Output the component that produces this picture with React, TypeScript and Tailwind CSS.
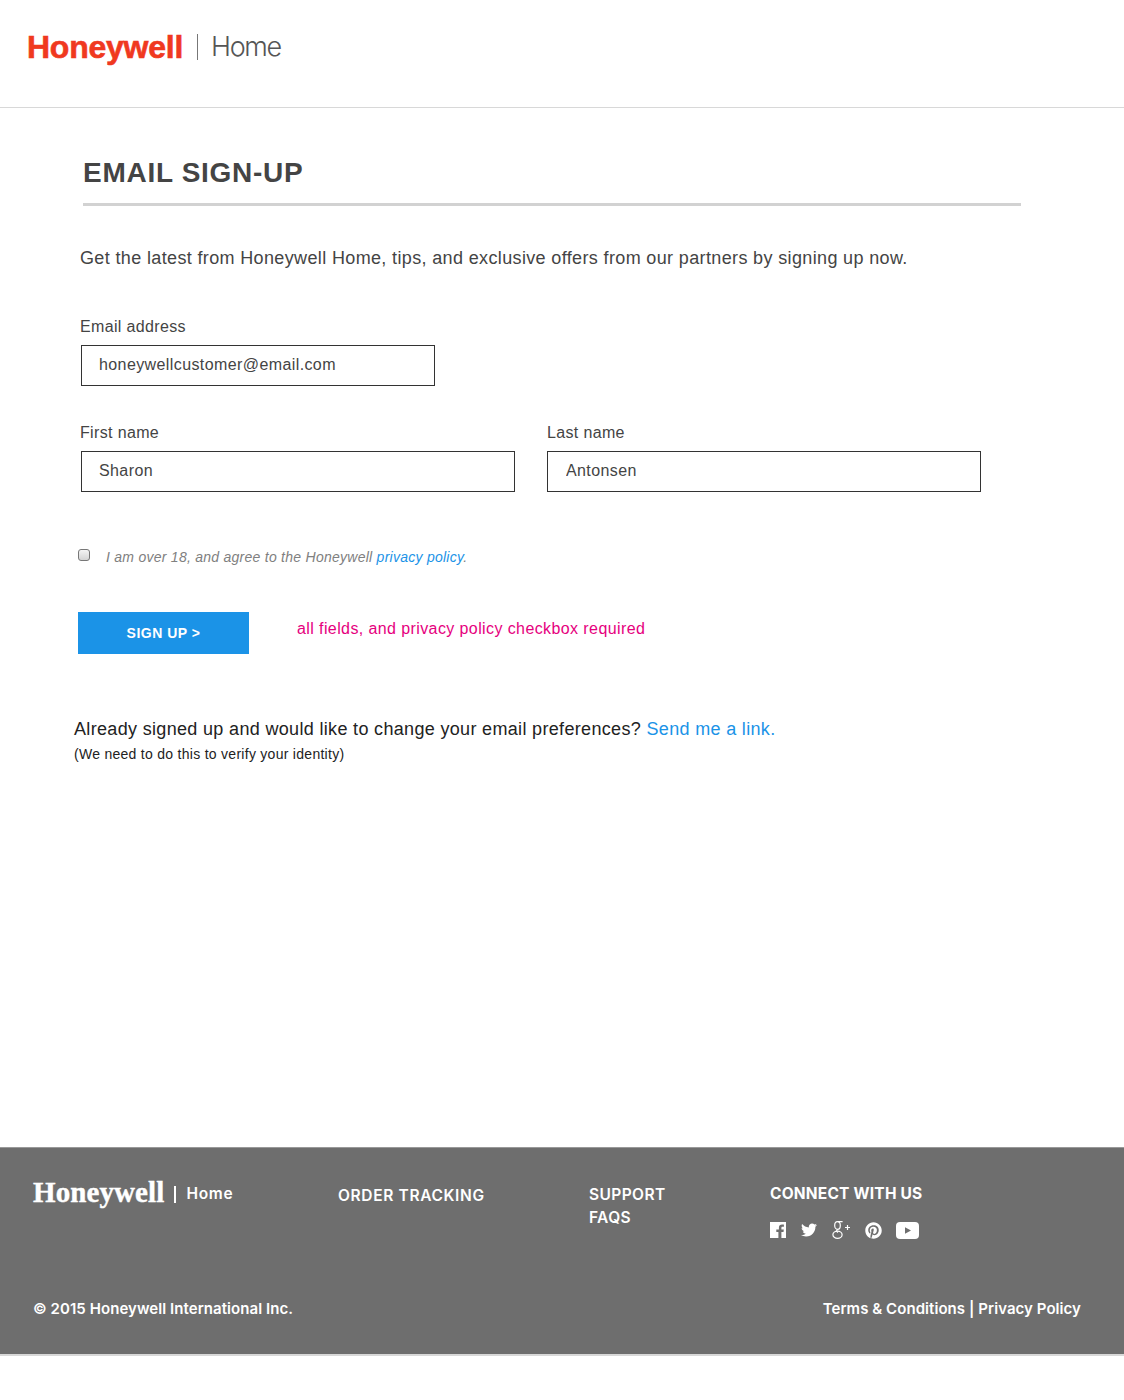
import React from 'react';
import { FaTwitter, FaPinterest } from 'react-icons/fa';

const helvetica = "font-['Liberation_Sans',Arial,sans-serif]";
const footerFont = "font-['Inter','Open_Sans',sans-serif]";

const Field = ({ label, value, className, last }: { label: string; value: string; className: string; last?: boolean }) => (
  <div className={className}>
    <label className={`block text-[16px] leading-[20px] tracking-[0.35px] text-[#444] ${last ? 'pl-[3px]' : 'pl-[2px]'}`}>{label}</label>
    <input
      readOnly
      value={value}
      className={`mt-[8px] ml-[3px] block h-[41px] w-full border border-[#333] bg-white pb-[2px] text-[16px] tracking-[0.4px] text-[#444] outline-none ${last ? 'px-[18px]' : 'px-[17px]'}`}
    />
  </div>
);

const Facebook = () => (
  <svg viewBox="0 0 16 16" className="h-[16px] w-[16px]" fill="white">
    <path fillRule="evenodd" d="M0 0h16v16h-4.6V9.9h2.1l.3-2.4h-2.4V6c0-.7.2-1.2 1.2-1.2h1.3V2.7c-.2 0-1-.1-1.9-.1-1.9 0-3.1 1.1-3.1 3.2v1.7H6.3v2.4h2.1V16H0z" />
  </svg>
);

const GooglePlus = () => (
  <svg viewBox="0 0 20 20" className="h-[20px] w-[20px]" fill="none" stroke="white" strokeWidth="1.2">
    <ellipse cx="6.5" cy="5.5" rx="2.8" ry="3.9" />
    <ellipse cx="6.5" cy="14.8" rx="4.6" ry="3.6" />
    <path d="M6.5 9.4c-1.4 1-1 2.2.4 3.2M7 1.6h4.6M14 7.5h5M16.5 5v5" />
  </svg>
);

const Youtube = () => (
  <svg viewBox="0 0 23 17" className="h-[17px] w-[23px]">
    <rect width="23" height="17" rx="4" fill="white" />
    <path d="M9 5.2l6 3.3-6 3.3z" fill="#6e6e6e" />
  </svg>
);

export default function App() {
  return (
    <div className={`${helvetica} h-[1400px] bg-white`}>
      <header className="flex h-[108px] items-center border-b border-[#d8d8d8] pb-[13px] pl-[27px]">
        <span className="text-[32px] leading-none font-bold tracking-[-0.25px] text-[#f0391f] [-webkit-text-stroke:0.6px_#f0391f]">Honeywell</span>
        <span className="ml-[14px] h-[26px] w-px bg-[#777]" />
        <span className="mb-[2px] ml-[13px] font-['Inter',sans-serif] text-[27px] leading-none font-light tracking-[-1.35px] text-[#555]">Home</span>
      </header>

      <main className="h-[1039px] pt-[49px] pl-[78px]">
        <h1 className="pl-[5px] text-[28px] leading-[32px] font-bold tracking-[0.72px] text-[#444]">EMAIL SIGN-UP</h1>
        <div className="mt-[14px] ml-[5px] h-[3px] w-[938px] bg-[#d2d2d2]" />

        <p className="mt-[40px] pl-[2px] text-[18px] leading-[24px] tracking-[0.36px] text-[#444]">
          Get the latest from Honeywell Home, tips, and exclusive offers from our partners by signing up now.
        </p>

        <Field label="Email address" value="honeywellcustomer@email.com" className="mt-[47px] w-[354px]" />

        <div className="mt-[37px] flex">
          <Field label="First name" value="Sharon" className="w-[434px]" />
          <Field label="Last name" value="Antonsen" className="ml-[32px] w-[434px]" last />
        </div>

        <div className="mt-[55px] flex items-center">
          <input
            type="checkbox"
            className="mb-[4px] h-[12px] w-[12px] appearance-none rounded-[3px] border border-[#777] bg-gradient-to-b from-[#f4f4f4] to-[#d4d4d4]"
          />
          <span className="ml-[16px] text-[14px] leading-[20px] tracking-[0.26px] text-[#808080] italic">
            I am over 18, and agree to the Honeywell <a className="text-[#1b93e7]">privacy policy</a>.
          </span>
        </div>

        <div className="mt-[45px] flex items-start">
          <button className="h-[42px] w-[171px] bg-[#1b93e7] text-[14px] font-bold tracking-[0.5px] text-white">SIGN UP &gt;</button>
          <span className="mt-[7px] ml-[48px] text-[16px] leading-[20px] tracking-[0.4px] text-[#e6007e]">
            all fields, and privacy policy checkbox required
          </span>
        </div>

        <p className="mt-[63px] -ml-[4px] text-[18px] leading-[24px] tracking-[0.33px] text-[#222]">
          Already signed up and would like to change your email preferences? <a className="text-[#1b93e7]">Send me a link.</a>
        </p>
        <p className="mt-[4px] -ml-[4px] text-[14px] leading-[18px] tracking-[0.28px] text-[#222]">(We need to do this to verify your identity)</p>
      </main>

      <footer className={`${footerFont} h-[209px] border-t border-b-2 border-t-[#999] border-b-[#d8d8d8] bg-[#6e6e6e] text-white`}>
        <div className="flex h-[122px] pt-[29px] pl-[33px] font-semibold">
          <div className="flex w-[305px] items-start">
            <span className="font-['Liberation_Serif',serif] text-[29px] leading-[30px] font-bold tracking-[0.1px] [-webkit-text-stroke:0.4px_white]">Honeywell</span>
            <span className="mt-[9px] ml-[10px] h-[17px] w-[2px] bg-white" />
            <span className="mt-[7px] ml-[10px] text-[15.5px] leading-[20px] tracking-[0.7px]">Home</span>
          </div>
          <div className="w-[251px] pt-[9px] text-[15.5px] leading-[20px] tracking-[0.65px]">ORDER TRACKING</div>
          <div className="w-[181px] pt-[6px] text-[15.5px] leading-[23px] tracking-[0.4px]">
            <div>SUPPORT</div>
            <div>FAQS</div>
          </div>
          <div className="pt-[5px]">
            <div className="text-[15.5px] leading-[24px] font-bold tracking-[0.2px]">CONNECT WITH US</div>
            <div className="mt-[14px] flex items-center">
              <Facebook />
              <FaTwitter className="ml-[15px] h-[16px] w-[16px]" />
              <span className="ml-[14px]"><GooglePlus /></span>
              <FaPinterest className="ml-[14px] h-[17px] w-[17px]" />
              <span className="ml-[14px]"><Youtube /></span>
            </div>
          </div>
        </div>
        <div className="flex items-center justify-between pt-[27px] pr-[43px] pl-[33px] text-[15px] leading-[24px] font-semibold tracking-[0.06px]">
          <span>© 2015 Honeywell International Inc.</span>
          <span>Terms &amp; Conditions | Privacy Policy</span>
        </div>
      </footer>
    </div>
  );
}
